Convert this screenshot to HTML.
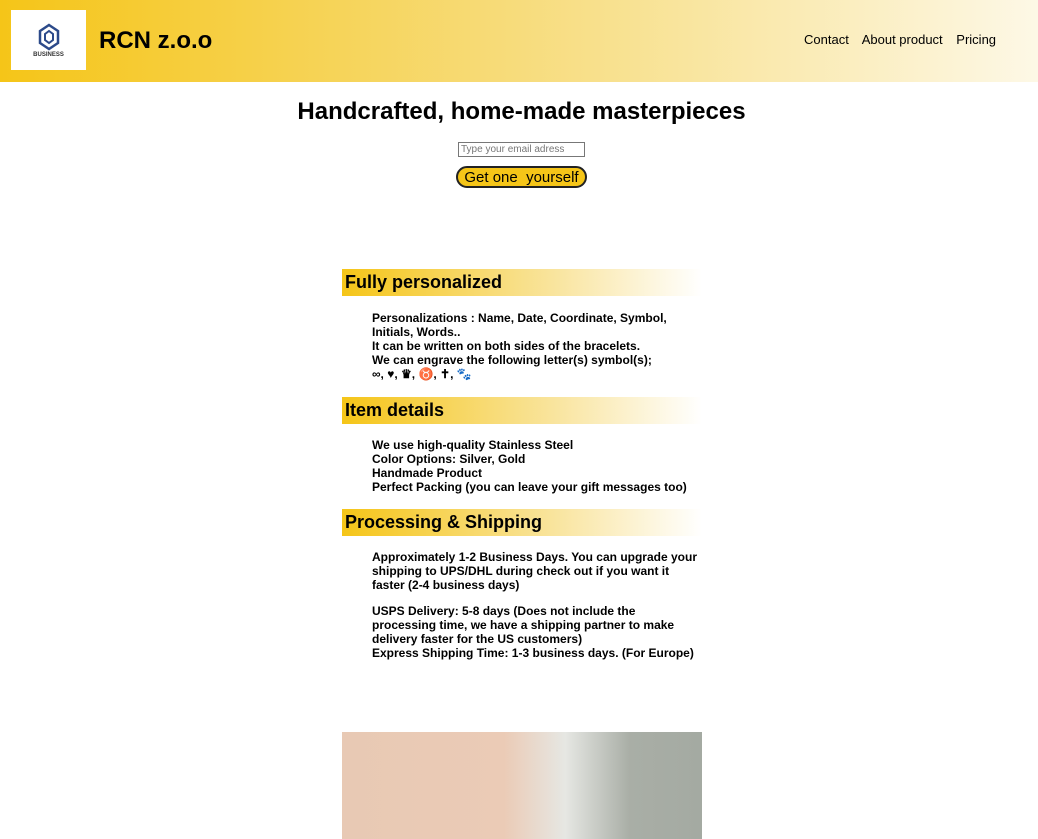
<!DOCTYPE html>
<html><head><meta charset="utf-8"><style>
*{box-sizing:border-box}
body{margin:0;width:1038px;height:839px;overflow:hidden;font-family:"Liberation Sans",Arial,sans-serif;background:#fff;color:#000}
header{position:absolute;left:0;top:0;width:1038px;height:82px;background:linear-gradient(90deg,#f5c518 0%,#f7dc7c 50%,#fdf8e6 100%)}
.logo{position:absolute;left:11px;top:10px;width:75px;height:60px;background:#fff}
.brand{position:absolute;left:99px;top:27px;font-size:24px;font-weight:bold}
nav{position:absolute;top:32px;left:804px;font-size:13px}
nav span{margin-right:10px}
h1{position:absolute;top:98px;left:0;width:1043px;text-align:center;font-size:24px;margin:0}
.inp{position:absolute;left:458px;top:142px;width:127px;height:15px;border:1px solid #777;font-size:10px;color:#777;padding-left:2px;line-height:13px}
.btn{position:absolute;left:456px;top:166px;width:131px;height:22px;border:2px solid #222;border-radius:11px;background:#f5c518;font-size:15px;text-align:center;line-height:19px}
.sec{position:absolute;left:342px;width:360px}
.h{height:27px;background:linear-gradient(90deg,#f5c518,#f9e5a0 60%,#fff);font-size:18px;font-weight:bold;padding-left:3px;line-height:27px}
.t{margin-left:30px;font-size:12px;font-weight:bold;line-height:14px}
.img{position:absolute;left:342px;top:732px;width:360px;height:107px;background:linear-gradient(90deg,#e8c9b4 0%,#ebcbb6 45%,#e6e7e3 62%,#a9aea6 80%,#a4aaa2 100%)}
</style></head><body>
<header>
<div class="logo"><svg width="75" height="60" viewBox="0 0 75 60"><path d="M38 15 L47 21 L47 33 L38 39 L29 33 L29 21 Z" fill="none" stroke="#2c4a8a" stroke-width="2.5"/><path d="M34 24 L38 21 L42 24 L42 30 L38 33 L34 30 Z" fill="none" stroke="#2c4a8a" stroke-width="2"/><text x="37.5" y="46" font-size="6" text-anchor="middle" fill="#333" font-weight="bold" font-family="Liberation Sans">BUSINESS</text></svg></div>
<div class="brand">RCN z.o.o</div>
<nav><span>Contact</span> <span>About product</span> <span>Pricing</span></nav>
</header>
<h1>Handcrafted, home-made masterpieces</h1>
<div class="inp">Type your email adress</div>
<div class="btn">Get one&nbsp; yourself</div>
<div class="sec" style="top:269px"><div class="h">Fully personalized</div>
<div class="t" style="margin-top:15px">Personalizations : Name, Date, Coordinate, Symbol, Initials, Words..<br>It can be written on both sides of the bracelets.<br>We can engrave the following letter(s) symbol(s);<br>∞, ♥, ♛, ♉, ✝, 🐾</div></div>
<div class="sec" style="top:397px"><div class="h">Item details</div>
<div class="t" style="margin-top:14px">We use high-quality Stainless Steel<br>Color Options: Silver, Gold<br>Handmade Product<br>Perfect Packing (you can leave your gift messages too)</div></div>
<div class="sec" style="top:509px"><div class="h">Processing &amp; Shipping</div>
<div class="t" style="margin-top:14px">Approximately 1-2 Business Days. You can upgrade your shipping to UPS/DHL during check out if you want it faster (2-4 business days)<br><div style="height:12px"></div>USPS Delivery: 5-8 days (Does not include the processing time, we have a shipping partner to make delivery faster for the US customers)<br>Express Shipping Time: 1-3 business days. (For Europe)</div></div>
<div class="img"></div>
</body></html>
